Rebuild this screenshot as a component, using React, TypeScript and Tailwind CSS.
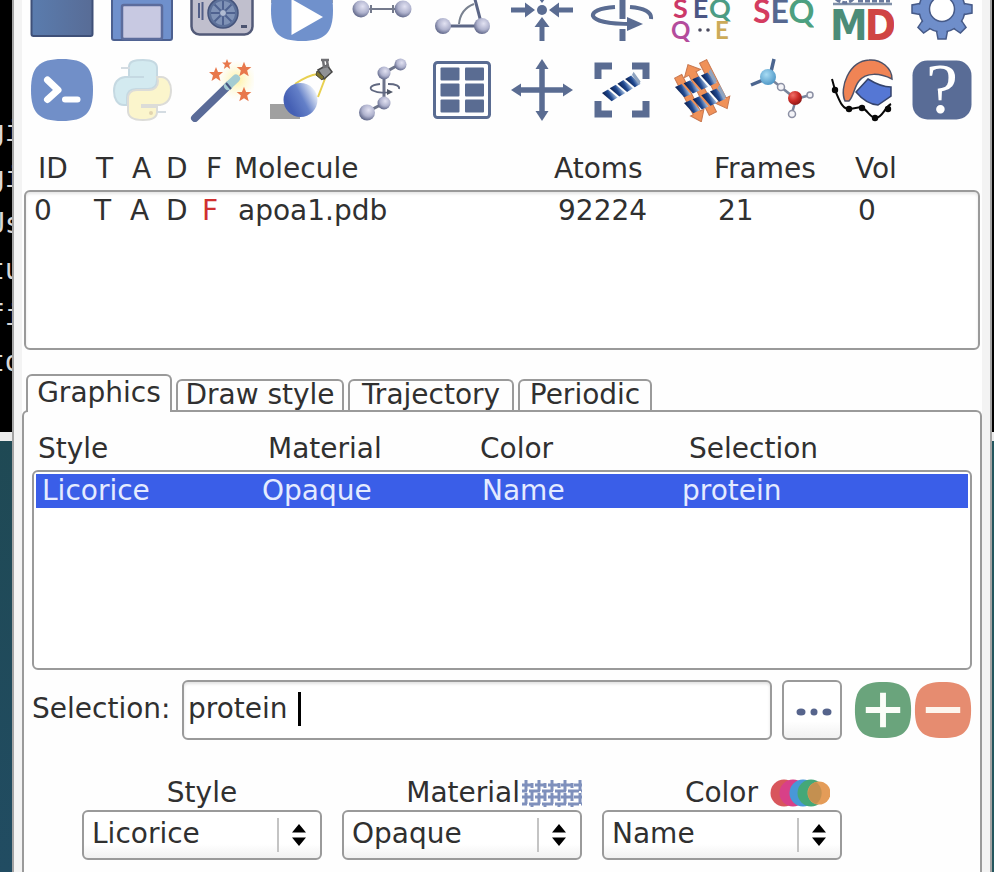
import type { ReactNode } from "react";

const SQUIRCLE =
  "M32 1C55 1 63 9 63 32C63 55 55 63 32 63C9 63 1 55 1 32C1 9 9 1 32 1Z";
const SLATE = "#5a6c92";

function Icon({ children }: { children: ReactNode }) {
  return (
    <svg viewBox="0 0 64 64" className="size-16" aria-hidden="true">
      {children}
    </svg>
  );
}

function Defs() {
  return (
    <svg className="absolute size-0" aria-hidden="true">
      <defs>
        <radialGradient id="atom" cx="0.6" cy="0.35" r="0.7">
          <stop offset="0" stopColor="#e2e2f2" />
          <stop offset="0.55" stopColor="#b0b3ce" />
          <stop offset="1" stopColor="#555d80" />
        </radialGradient>
        <linearGradient id="ball" x1="0.2" y1="0.7" x2="0.95" y2="0.3">
          <stop offset="0" stopColor="#4560b4" />
          <stop offset="0.5" stopColor="#6480c8" />
          <stop offset="1" stopColor="#e6edf8" />
        </linearGradient>
        <linearGradient id="folder" x1="0" y1="0" x2="1" y2="0">
          <stop offset="0" stopColor="#5a7cae" />
          <stop offset="1" stopColor="#586c96" />
        </linearGradient>
        <linearGradient id="helix" x1="0" y1="0" x2="1" y2="0">
          <stop offset="0" stopColor="#0c1e4c" />
          <stop offset="0.5" stopColor="#1f4890" />
          <stop offset="1" stopColor="#b4cce8" />
        </linearGradient>
        <radialGradient id="nitrogen" cx="0.4" cy="0.35" r="0.7">
          <stop offset="0" stopColor="#a8dcf4" />
          <stop offset="1" stopColor="#4a94c4" />
        </radialGradient>
        <radialGradient id="oxygen" cx="0.35" cy="0.3" r="0.8">
          <stop offset="0" stopColor="#f07068" />
          <stop offset="0.5" stopColor="#cc2c28" />
          <stop offset="1" stopColor="#801414" />
        </radialGradient>
        <radialGradient id="glow">
          <stop offset="0" stopColor="#fff2a0" />
          <stop offset="1" stopColor="#fff8d0" stopOpacity="0" />
        </radialGradient>
      </defs>
    </svg>
  );
}

function Atom({ x, y, r }: { x: number; y: number; r: number }) {
  return <circle cx={x} cy={y} r={r} fill="url(#atom)" />;
}

function Star({ x, y, s }: { x: number; y: number; s: number }) {
  return (
    <path
      transform={`translate(${x} ${y}) scale(${s})`}
      d="M0-7L2-2L7-2L3 1.500L4.500 7L0 4L-4.500 7L-3 1.500L-7-2L-2-2Z"
      fill="#e8784c"
    />
  );
}

function Helix() {
  return (
    <g>
      {[0, 9, 18, 27].map((x) => (
        <path key={x} d={`M${x} 0h7l4 12h-7z`} fill="url(#helix)" />
      ))}
      <path d="M35 0l3-2l1 12l-3 2z" fill="#8fa4c0" />
    </g>
  );
}

function GearShape() {
  return (
    <Icon>
      <g fill="#6f8eca" stroke="#465a88" strokeWidth="1.500">
        {[0, 45, 90, 135, 180, 225, 270, 315].map((a) => (
          <path key={a} transform={`rotate(${a} 32 31)`} d="M26 12L28 1H36L38 12Z" />
        ))}
        <circle cx="32" cy="31" r="23" />
      </g>
      <g fill="#6f8eca">
        {[0, 45, 90, 135, 180, 225, 270, 315].map((a) => (
          <path key={a} transform={`rotate(${a} 32 31)`} d="M27 14L28 5H36L37 14Z" />
        ))}
      </g>
      <circle cx="32" cy="31" r="12.500" fill="#fff" stroke="#465a88" strokeWidth="1.500" />
    </Icon>
  );
}

const tools: { name: string; icon: ReactNode }[] = [
  {
    name: "Open",
    icon: (
      <Icon>
        <rect x="1.500" y="8" width="61" height="50" rx="2" fill="url(#folder)" stroke="#3f5078" strokeWidth="2" />
      </Icon>
    ),
  },
  {
    name: "Save",
    icon: (
      <Icon>
        <rect x="2" y="2" width="60" height="60" rx="2" fill="#6f90cc" stroke="#4c6090" strokeWidth="2" />
        <rect x="12" y="27" width="40" height="34" rx="2" fill="#c8c9e2" stroke="#5c6c9c" strokeWidth="2.500" />
      </Icon>
    ),
  },
  {
    name: "Snapshot",
    icon: (
      <Icon>
        <rect x="1.500" y="8" width="61" height="48.500" rx="8" fill="#c0bfcd" stroke="#525a78" strokeWidth="2.500" />
        <path d="M9 25V40M12.500 24V42" stroke="#525f88" strokeWidth="2" />
        <circle cx="33" cy="35" r="15" fill="#5c7099" stroke="#45547c" strokeWidth="1.500" />
        <circle cx="33" cy="35" r="12" fill="#7f92b6" />
        <path d="M33 23V47M21 35H45M24.500 26.500L41.500 43.500M41.500 26.500L24.500 43.500" stroke="#4f6290" strokeWidth="2" />
        <circle cx="33" cy="35" r="3.500" fill="#b0bbd2" stroke="#4f6290" />
        <rect x="51" y="47" width="6" height="3" fill="#4c5470" />
      </Icon>
    ),
  },
  {
    name: "Play movie",
    icon: (
      <Icon>
        <path d="M1 8H63V25H1Z" fill="#9aa0ac" />
        <path d={SQUIRCLE} fill="#7091cc" />
        <path d="M21.500 21L53 39L21.500 57Z" fill="#fff" />
      </Icon>
    ),
  },
  {
    name: "Bond length",
    icon: (
      <Icon>
        <path d="M12 31H52M21 27V35M43 27V35" stroke="#747a8c" strokeWidth="2" />
        <Atom x={11} y={31} r={8.5} />
        <Atom x={53} y={31} r={8.5} />
      </Icon>
    ),
  },
  {
    name: "Angle",
    icon: (
      <Icon>
        <path d="M14 48H52L42 10" fill="none" stroke="#5c6686" strokeWidth="3" />
        <path d="M29 46C30 36 36 29 44 26" fill="none" stroke="#7a8290" strokeWidth="2" />
        <Atom x={13} y={48} r={8} />
        <Atom x={52} y={48} r={8} />
        <Atom x={42} y={10} r={8} />
      </Icon>
    ),
  },
  {
    name: "Center",
    icon: (
      <Icon>
        <circle cx="32" cy="32" r="5" fill={SLATE} />
        {[0, 90, 180, 270].map((a) => (
          <path key={a} transform={`rotate(${a} 32 32)`} d="M1 29.500H15V24.500L25 32L15 39.500V34.500H1Z" fill={SLATE} />
        ))}
      </Icon>
    ),
  },
  {
    name: "Rotate",
    icon: (
      <Icon>
        <path d="M32.500 0V41M32.500 51V63" stroke={SLATE} strokeWidth="6" />
        <path d="M25 29C9 30 2 34 3 38C5 43 20 46 42 46M40 29C54 30 62 34 61 41" fill="none" stroke={SLATE} strokeWidth="4" />
        <path d="M37 39L53 46L37 53Z" fill={SLATE} />
      </Icon>
    ),
  },
  {
    name: "Sequence alignment",
    icon: (
      <Icon>
        <g fontFamily="Lato">
          <text x="3" y="40" fontWeight="700" fontSize="27">
            <tspan fill="#cc3868">S</tspan>
            <tspan dx="5" fill="#4c5684">E</tspan>
            <tspan dx="1" fill="#4c9c84">Q</tspan>
          </text>
          <text x="1" y="61" fontWeight="700" fontSize="24" fill="#b44c9c">
            Q
          </text>
          <text x="45" y="61" fontWeight="700" fontSize="24" fill="#ccaa58">
            E
          </text>
        </g>
        <circle cx="30" cy="52" r="1.800" fill="#4c4c60" />
        <circle cx="38" cy="52" r="1.800" fill="#4c4c60" />
      </Icon>
    ),
  },
  {
    name: "Sequence",
    icon: (
      <Icon>
        <text x="3" y="45" fontFamily="Lato" fontWeight="700" fontSize="32">
          <tspan fill="#d43c60">S</tspan>
          <tspan fill="#566890">E</tspan>
          <tspan fill="#4ca080">Q</tspan>
        </text>
      </Icon>
    ),
  },
  {
    name: "Molecular dynamics",
    icon: (
      <Icon>
        <path d="M3 26H62" stroke="#8090a8" strokeWidth="2.500" />
        <path d="M6 21C12 26 20 26 24 20M28 23H60" fill="none" stroke="#68789c" strokeWidth="3" strokeDasharray="5 2" />
        <text x="0" y="62" fontFamily="'Liberation Sans Narrow', 'DejaVu Sans Condensed', 'Roboto'" fontWeight="700" fontSize="42">
          <tspan fill="#4c8c78">M</tspan>
          <tspan dx="-3" fill="#d04444">D</tspan>
        </text>
      </Icon>
    ),
  },
  { name: "Settings", icon: <GearShape /> },
  {
    name: "Command line",
    icon: (
      <Icon>
        <path d={SQUIRCLE} fill="#718fc8" />
        <path d="M17.500 22L28 32L17.500 41.500" fill="none" stroke="#fff" strokeWidth="7" strokeLinecap="round" strokeLinejoin="round" />
        <path d="M35 41.500H47.500" stroke="#fff" strokeWidth="6" strokeLinecap="round" />
      </Icon>
    ),
  },
  {
    name: "Python",
    icon: (
      <Icon>
        <path d="M19 19V9C19 3 25 2 33 2C41 2 47 4 47 10V22C47 29 43 31 38 31H26C19 31 17 35 17 40V47H14C7 47 4 40 4 33C4 25 8 20 15 19H34" fill="#d3eaf0" stroke="#c5d9e2" strokeWidth="2" />
        <path d="M47 19H51C58 19 61 26 61 32C61 41 57 46 50 47H32V49H47V54C47 60 40 62 33 62C24 62 18 59 18 53V41C18 35 22 32 27 32H39C45 32 48 28 48 23Z" fill="#fbf5cc" stroke="#dcdcd8" strokeWidth="2" />
        <path d="M11 10H20M47 54H56" stroke="#d4dce2" strokeWidth="2" />
        <circle cx="41" cy="55" r="2" fill="#e2d4b0" />
      </Icon>
    ),
  },
  {
    name: "Magic wand",
    icon: (
      <Icon>
        <circle cx="47" cy="22" r="20" fill="url(#glow)" />
        <path d="M5 60L39 27" stroke="#5a6b98" strokeWidth="8" strokeLinecap="round" />
        <path d="M38 28L46 20.500" stroke="#a4ccd2" strokeWidth="8" strokeLinecap="round" />
        <path d="M36 25L41 31" stroke="#465580" strokeWidth="2" />
        <Star x={26} y={16} s={1} />
        <Star x={37} y={6} s={0.7} />
        <Star x={54} y={11} s={1.05} />
        <Star x={54} y={36} s={1.05} />
      </Icon>
    ),
  },
  {
    name: "Lighting",
    icon: (
      <Icon>
        <path d="M0 46H30V61H0Z" fill="#a0a0a0" />
        <path d="M25 26Q38 17 48 16M56 18L48 39" fill="none" stroke="#e8d050" strokeWidth="2" />
        <circle cx="30.500" cy="42" r="17" fill="url(#ball)" />
        <path d="M48 12L57 7L62 14L54 21Z" fill="#909296" stroke="#484848" strokeWidth="1.500" />
        <path d="M47 13L54 19L52 22L46 17Z" fill="#7e742c" stroke="#484838" />
        <path d="M51 2H59M53 2L54 9L58 8L57 3" fill="none" stroke="#707074" strokeWidth="2.500" />
      </Icon>
    ),
  },
  {
    name: "Dihedral",
    icon: (
      <Icon>
        <path d="M50 6L34 15V45L17 54" fill="none" stroke="#6c738a" strokeWidth="3" />
        <path d="M30 26C20 27 18 31 24 33C28 35 36 35 40 34M38 26C46 26 50 28 49 31" fill="none" stroke="#606880" strokeWidth="1.800" />
        <path d="M37 31L43 34L37 37Z" fill="#505868" />
        <Atom x={50.5} y={6.5} r={6} />
        <Atom x={34} y={15} r={6.5} />
        <Atom x={34} y={45} r={6.5} />
        <Atom x={17} y={54.5} r={8} />
      </Icon>
    ),
  },
  {
    name: "Table",
    icon: (
      <Icon>
        <rect x="4.500" y="4.500" width="55" height="55" rx="3" fill="#fff" stroke={SLATE} strokeWidth="3" />
        {[9.5, 25.5, 41.5].map((y) => (
          <g key={y} fill={SLATE}>
            <rect x="10.500" y={y} width="19" height="13" rx="1" />
            <rect x="35" y={y} width="19" height="13" rx="1" />
          </g>
        ))}
      </Icon>
    ),
  },
  {
    name: "Translate",
    icon: (
      <Icon>
        <path d="M8 32H56M32 8V56" stroke={SLATE} strokeWidth="5.500" />
        {[0, 90, 180, 270].map((a) => (
          <path key={a} transform={`rotate(${a} 32 32)`} d="M1 32L11 25.500V38.500Z" fill={SLATE} />
        ))}
      </Icon>
    ),
  },
  {
    name: "Fit view",
    icon: (
      <Icon>
        <path d="M8 21V8H22M42 8H56V21M56 43V56H42M22 56H8V43" fill="none" stroke={SLATE} strokeWidth="7" />
        <g transform="translate(12 35) rotate(-31)">
          <Helix />
        </g>
      </Icon>
    ),
  },
  {
    name: "Membrane helices",
    icon: (
      <Icon>
        <g transform="rotate(-27 32 32)" fill="#f09158" stroke="#c87850" strokeWidth="1">
          <path d="M13 9H21V50H25L17 60L10 50H13Z" />
          <path d="M27 58V13H22L31 3L40 13H35V58Z" />
          <path d="M42 7H50V50H54L46 60L38 50H42Z" />
        </g>
        <g transform="translate(5 29) rotate(-24) scale(1.05 1.1)">
          <Helix />
        </g>
        <g transform="translate(14 45) rotate(-24) scale(1.05 1.1)">
          <Helix />
        </g>
      </Icon>
    ),
  },
  {
    name: "Hydrogen bonds",
    icon: (
      <Icon>
        <path d="M20 18L24 1M18 20L1 27" stroke="#4c6690" strokeWidth="3.500" />
        <path d="M22 22L46 41L60 37M46 41L42 55" fill="none" stroke="#78849c" strokeWidth="2.500" />
        <circle cx="18" cy="19" r="8" fill="url(#nitrogen)" />
        <circle cx="45" cy="40" r="7" fill="url(#oxygen)" />
        <g fill="#f4f4f8" stroke="#8c90a4" strokeWidth="1.500">
          <circle cx="31" cy="29" r="3.500" />
          <circle cx="60" cy="37" r="3" />
          <circle cx="42" cy="56" r="3.500" />
        </g>
      </Icon>
    ),
  },
  {
    name: "Ramachandran",
    icon: (
      <Icon>
        <path d="M26 34L38 21C46 26 55 29 61 29V38L48 47Q36 46 26 34Z" fill="#5577d4" stroke="#34436c" strokeWidth="1.500" />
        <path d="M15 43C9 30 19 3 39 2C51 1 62 10 62 21C50 15 36 14 29 23C24 29 24 38 19 43Z" fill="#f08455" stroke="#4e5268" strokeWidth="1.500" />
        <path d="M2 21L5 32C9 41 12 52 20 51L31 49C38 52 40 60 46 60C52 60 55 49 61 46" fill="none" stroke="#080808" strokeWidth="2" />
        <g fill="#080808">
          <circle cx="5" cy="32" r="3.200" />
          <circle cx="19" cy="51" r="3.200" />
          <circle cx="32" cy="50" r="3.200" />
          <circle cx="45" cy="60" r="3.200" />
          <circle cx="58" cy="51" r="3.200" />
        </g>
      </Icon>
    ),
  },
  {
    name: "Help",
    icon: (
      <Icon>
        <rect x="2.500" y="2.500" width="59" height="59" rx="15" fill="#596c96" />
        <text x="32" y="55" textAnchor="middle" fontFamily="Liberation Serif" fontSize="72" fill="#fff">
          ?
        </text>
      </Icon>
    ),
  },
];

function MaterialIcon() {
  return (
    <svg viewBox="0 0 60 28" className="h-7 w-[60px]" aria-hidden="true">
      <g stroke="#7f90bc" strokeWidth="3">
        {[6, 12, 18, 25].map((y, i) => (
          <path key={y} d={`M0 ${y}H60`} strokeDasharray="11 2" strokeDashoffset={i % 2 ? 6 : 0} />
        ))}
        {[4, 10, 17, 23, 30, 37, 43, 50, 58].map((x, i) => (
          <path key={x} d={i % 2 ? `M${x} 4V28` : `M${x} 1V26`} strokeDasharray="11 2" strokeDashoffset={i % 2 ? 6 : 0} />
        ))}
      </g>
    </svg>
  );
}

function ColorIcon() {
  return (
    <svg viewBox="0 0 60 28" className="h-7 w-[60px]" aria-hidden="true">
      <circle cx="14" cy="14" r="13.500" fill="#d8565c" />
      <circle cx="23" cy="14" r="13.500" fill="#d84088" />
      <circle cx="33" cy="14" r="13.500" fill="#4898d8" />
      <circle cx="41" cy="14" r="13.500" fill="#44a878" />
      <circle cx="49" cy="14" r="11.500" fill="#e49c58" />
      <path d="M46 3A11.500 11.500 0 0 0 46 25A13.500 13.500 0 0 0 46 3Z" fill="#c49050" />
    </svg>
  );
}

const box = "rounded-[6px] border-2 border-[#9a9a9a] bg-white";

function Picker({ id, label, value, icon, align }: { id: string; label: string; value: string; icon?: ReactNode; align: string }) {
  return (
    <div className="w-60">
      <div className={`flex h-[34px] items-center ${align}`}>
        <label htmlFor={id}>{label}</label>
        {icon}
      </div>
      <div className="relative">
        <select
          id={id}
          defaultValue={value}
          className="h-[50px] w-full appearance-none rounded-[6px] border-2 border-[#9a9a9a] bg-linear-to-b from-white from-70% to-[#f1f1f1] pb-0.5 pl-2 outline-none"
        >
          <option>{value}</option>
        </select>
        <div className="pointer-events-none absolute inset-y-2 right-[15px] flex items-center border-l-2 border-[#c4c4c4] pl-3">
          <svg viewBox="0 0 16 24" className="h-6 w-4" aria-hidden="true">
            <path d="M1 9.500L8 1L15 9.500ZM1 14.500L8 23L15 14.500Z" fill="#000" />
          </svg>
        </div>
      </div>
    </div>
  );
}

const tabs = [
  { label: "Graphics", size: "z-10 h-[38px] w-[146px] pb-0.5", active: true },
  { label: "Draw style", size: "h-[33px] w-[168px] pb-1", active: false },
  { label: "Trajectory", size: "h-[33px] w-[166px] pb-1", active: false },
  { label: "Periodic", size: "h-[33px] w-[134px] pb-1", active: false },
];

export default function App() {
  return (
    <div className="flex h-screen overflow-hidden bg-white font-['DejaVu_Sans',sans-serif] text-[28px] leading-8 text-[#303030]">
      <Defs />
      <div className="flex w-3 shrink-0 flex-col overflow-hidden">
        <div className="flex h-[432px] shrink-0 flex-col bg-black pt-[109px] font-['DejaVu_Sans_Mono',monospace] leading-[46px] text-[#d8d8d8]">
          {["gi", "gi", "Us", "tu", "fi", "to"].map((t, i) => (
            <span key={i} className="-ml-3">
              {t}
            </span>
          ))}
        </div>
        <div className="h-[9px] shrink-0 bg-[#ececec]" />
        <div className="flex-1 bg-linear-to-b from-[#1f4954] to-[#214c62]" />
      </div>

      <main className="flex min-w-0 flex-1 flex-col border-x-2 border-[#a4a4a4] bg-[#f3f3f3] px-2">
        <div className="flex flex-1 flex-col bg-[#fefefe]">
          <div role="toolbar" aria-label="Tools" className="-mt-[30px] grid grid-cols-12">
            {tools.map((t) => (
              <button key={t.name} type="button" aria-label={t.name} className="flex h-20 items-center justify-center">
                {t.icon}
              </button>
            ))}
          </div>

          <table className="mx-0.5 mt-4 block">
            <thead className="block">
              <tr className="grid h-11 grid-cols-[58px_36px_34px_40px_28px_320px_160px_141px_1fr] items-center pl-3.5 pt-0.5 text-left">
                {["ID", "T", "A", "D", "F", "Molecule", "Atoms", "Frames", "Vol"].map((h) => (
                  <th key={h} className="font-normal">
                    {h}
                  </th>
                ))}
              </tr>
            </thead>
            <tbody className={`block h-40 pt-0.5 ${box} shadow-[inset_0_2px_3px_#e6e6e6]`}>
              <tr className="grid h-[34px] grid-cols-[60px_36px_36px_36px_36px_320px_160px_140px_1fr] items-center pl-2">
                {["0", "T", "A", "D", "F", "apoa1.pdb", "92224", "21", "0"].map((c, i) => (
                  <td key={i} className={i === 4 ? "text-[#d03030]" : ""}>
                    {c}
                  </td>
                ))}
              </tr>
            </tbody>
          </table>

          <div role="tablist" className="-mb-0.5 mt-6 flex items-end gap-1 pl-1">
            {tabs.map((t) => (
              <button
                key={t.label}
                type="button"
                role="tab"
                aria-selected={t.active}
                className={`flex items-center justify-center rounded-t-[6px] border-2 border-b-0 border-[#9a9a9a] bg-[#fefefe] whitespace-nowrap ${t.size}`}
              >
                {t.label}
              </button>
            ))}
          </div>

          <section className="flex-1 rounded-t-[6px] border-2 border-b-0 border-[#9a9a9a] px-2 pt-3.5">
            <table className="block">
              <thead className="block">
                <tr className="grid h-11 grid-cols-[230px_212px_209px_1fr] items-center pl-1.5 pt-0.5 text-left">
                  {["Style", "Material", "Color", "Selection"].map((h) => (
                    <th key={h} className="font-normal">
                      {h}
                    </th>
                  ))}
                </tr>
              </thead>
              <tbody className={`block h-[200px] p-0.5 ${box}`}>
                <tr className="grid h-[34px] grid-cols-[220px_220px_200px_1fr] items-center bg-[#3a5ee8] pl-1.5 text-[#e4ebff]">
                  {["Licorice", "Opaque", "Name", "protein"].map((c) => (
                    <td key={c}>{c}</td>
                  ))}
                </tr>
              </tbody>
            </table>

            <div className="mt-2.5 flex items-center">
              <label htmlFor="selection" className="w-[150px] shrink-0 pb-0.5">
                Selection:
              </label>
              <div className="relative min-w-0 flex-1">
                <input
                  id="selection"
                  defaultValue="protein "
                  className={`block h-[60px] w-full pb-1 pl-1 outline-none ${box} shadow-[inset_0_2px_3px_#e2e2e2]`}
                />
                <span className="absolute left-[116px] top-3 h-[34px] w-[3px] bg-black" />
              </div>
              <button
                type="button"
                aria-label="More"
                className="ml-2.5 flex size-[60px] items-center justify-center rounded-[6px] border-2 border-[#9a9a9a] bg-linear-to-b from-white from-70% to-[#f1f1f1]"
              >
                <svg viewBox="0 0 56 56" className="size-14" aria-hidden="true">
                  <g fill="#56648c">
                    <ellipse cx="17" cy="30" rx="4.500" ry="3.500" />
                    <ellipse cx="30" cy="30" rx="3.500" ry="3.500" />
                    <ellipse cx="43" cy="30" rx="4.500" ry="3.500" />
                  </g>
                </svg>
              </button>
              <button type="button" aria-label="Add" className="ml-3">
                <svg viewBox="0 0 64 64" className="size-[58px]" aria-hidden="true">
                  <path d={SQUIRCLE} fill="#6aa47c" />
                  <path d="M13 32H51M32 13V51" stroke="#fbfdf8" strokeWidth="6.500" />
                </svg>
              </button>
              <button type="button" aria-label="Remove" className="ml-0.5">
                <svg viewBox="0 0 64 64" className="size-[58px]" aria-hidden="true">
                  <path d={SQUIRCLE} fill="#e68c70" />
                  <path d="M13 32H51" stroke="#fdf6ee" strokeWidth="6.500" />
                </svg>
              </button>
            </div>

            <div className="mt-9 flex gap-5 pl-[50px]">
              <Picker id="style" label="Style" value="Licorice" align="justify-center" />
              <Picker id="material" label="Material" value="Opaque" icon={<MaterialIcon />} align="justify-end gap-0.5" />
              <Picker id="color" label="Color" value="Name" icon={<ColorIcon />} align="justify-end gap-3 pr-3" />
            </div>
          </section>
        </div>
      </main>

      <div className="flex w-0.5 shrink-0 flex-col">
        <div className="h-[432px] shrink-0 bg-black" />
        <div className="h-[9px] shrink-0 bg-[#ececec]" />
        <div className="flex-1 bg-[#24565e]" />
      </div>
    </div>
  );
}
